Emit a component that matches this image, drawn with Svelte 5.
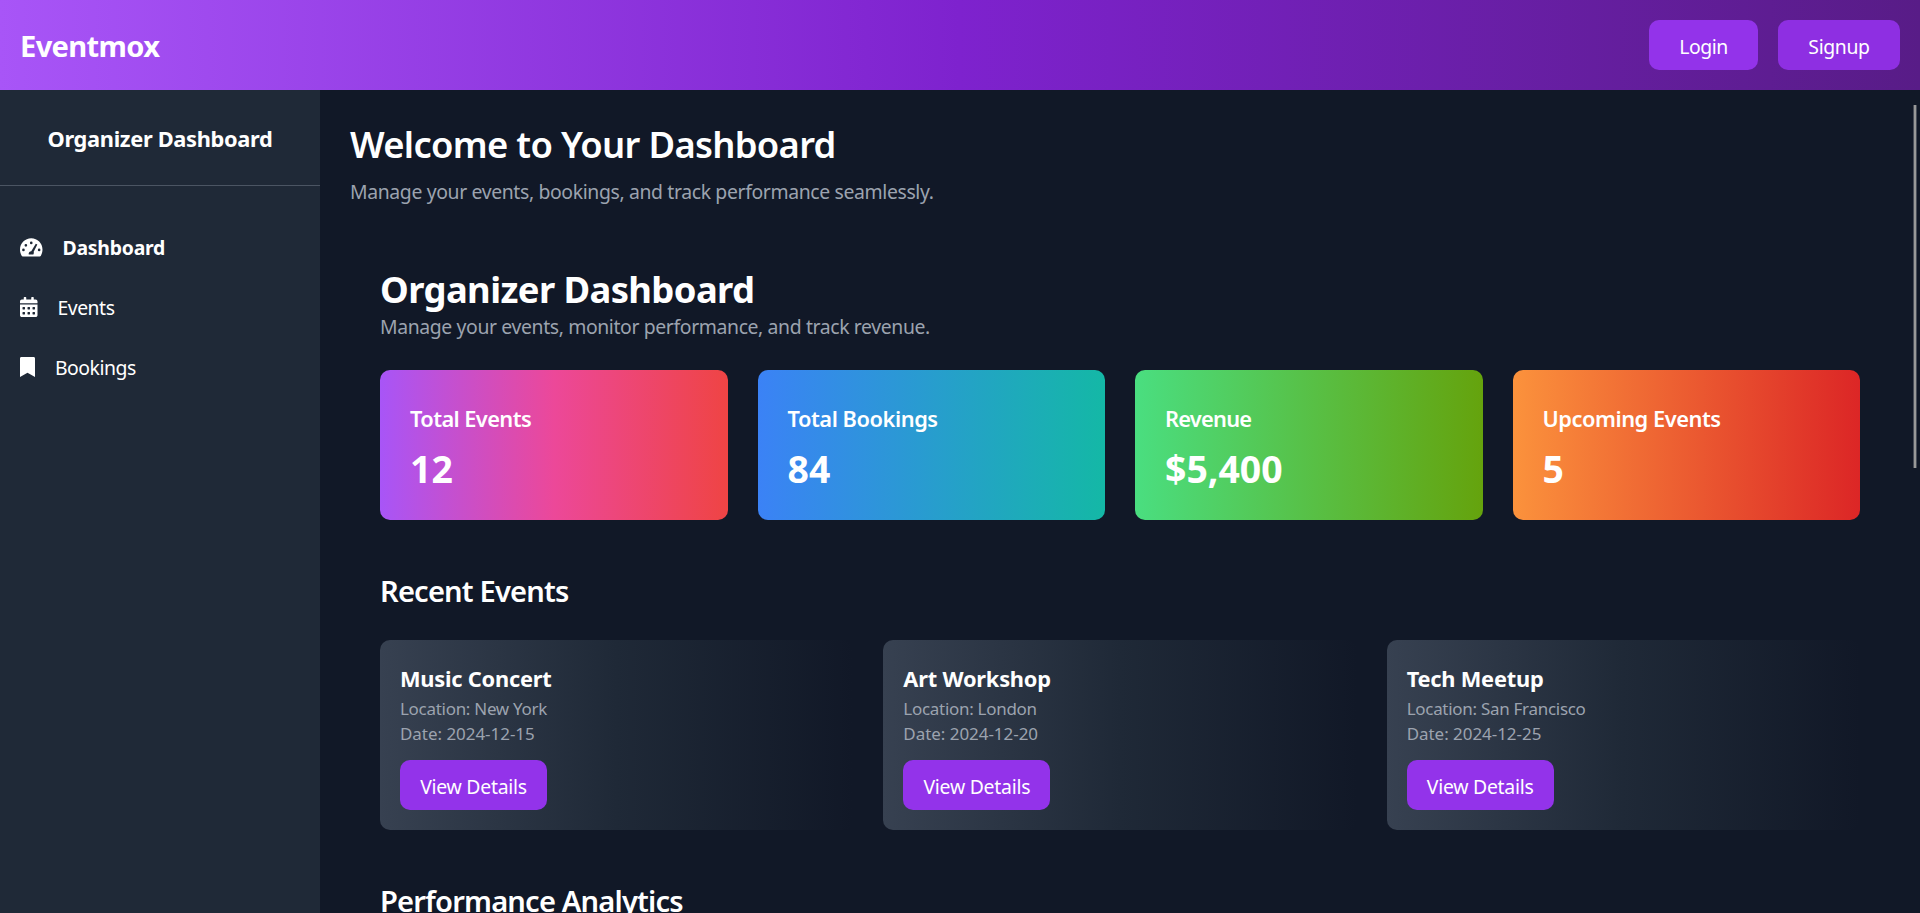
<script>
  const stats = [
    { title: 'Total Events', value: '12', tone: 'pink', track: -0.027 },
    { title: 'Total Bookings', value: '84', tone: 'blue', track: -0.0205 },
    { title: 'Revenue', value: '$5,400', tone: 'green', track: -0.0345 },
    { title: 'Upcoming Events', value: '5', tone: 'orange', track: -0.0215 }
  ];
  const events = [
    { name: 'Music Concert', location: 'New York', date: '2024-12-15' },
    { name: 'Art Workshop', location: 'London', date: '2024-12-20' },
    { name: 'Tech Meetup', location: 'San Francisco', date: '2024-12-25' }
  ];
  const nav = [
    {
      label: 'Dashboard',
      active: true,
      width: 576,
      path: 'M288 32C129 32 0 161 0 320c0 60 16 115 42 158 6 11 17 20 30 20h432c13 0 24-9 30-20 26-43 42-98 42-158C576 161 447 32 288 32zM288 118a34 34 0 1 1 0 68a34 34 0 1 1 0-68zM150 180a34 34 0 1 1 0 68a34 34 0 1 1 0-68zM88 296a34 34 0 1 1 0 68a34 34 0 1 1 0-68zM490 296a34 34 0 1 1 0 68a34 34 0 1 1 0-68zM404 170l40 24-94 186c8 22 4 46-8 66H224c-10-44 18-78 64-84z'
    },
    {
      label: 'Events',
      width: 448,
      path: 'M0 464c0 26.5 21.5 48 48 48h352c26.5 0 48-21.5 48-48V192H0v272zm320-196c0-6.6 5.4-12 12-12h40c6.6 0 12 5.4 12 12v40c0 6.6-5.4 12-12 12h-40c-6.6 0-12-5.4-12-12v-40zm0 128c0-6.6 5.4-12 12-12h40c6.6 0 12 5.4 12 12v40c0 6.6-5.4 12-12 12h-40c-6.6 0-12-5.4-12-12v-40zM192 268c0-6.6 5.4-12 12-12h40c6.6 0 12 5.4 12 12v40c0 6.6-5.4 12-12 12h-40c-6.6 0-12-5.4-12-12v-40zm0 128c0-6.6 5.4-12 12-12h40c6.6 0 12 5.4 12 12v40c0 6.6-5.4 12-12 12h-40c-6.6 0-12-5.4-12-12v-40zM64 268c0-6.6 5.4-12 12-12h40c6.6 0 12 5.4 12 12v40c0 6.6-5.4 12-12 12H76c-6.6 0-12-5.4-12-12v-40zm0 128c0-6.6 5.4-12 12-12h40c6.6 0 12 5.4 12 12v40c0 6.6-5.4 12-12 12H76c-6.6 0-12-5.4-12-12v-40zM400 64h-48V16c0-8.8-7.2-16-16-16h-32c-8.8 0-16 7.2-16 16v48H160V16c0-8.8-7.2-16-16-16h-32c-8.8 0-16 7.2-16 16v48H48C21.5 64 0 85.5 0 112v48h448v-48c0-26.5-21.5-48-48-48z'
    },
    {
      label: 'Bookings',
      width: 384,
      path: 'M0 512V36C0 16 16 0 36 0h312c20 0 36 16 36 36v476L192 400 0 512z'
    }
  ];
</script>

<div class="page">
  <header class="topbar">
    <div class="brand">Eventmox</div>
    <div class="actions">
      <button class="login">Login</button>
      <button class="signup">Signup</button>
    </div>
  </header>

  <div class="body">
    <aside class="sidebar">
      <h2>Organizer Dashboard</h2>
      <nav>
        {#each nav as item}
          <a href="#top" class:active={item.active}>
            <svg viewBox="0 0 {item.width} 512" height="20" width={(item.width / 512) * 20} aria-hidden="true">
              <path fill="currentColor" fill-rule="evenodd" d={item.path} />
            </svg>
            <span>{item.label}</span>
          </a>
        {/each}
      </nav>
    </aside>

    <main>
      <h1 class="welcome">Welcome to Your Dashboard</h1>
      <p class="lead">Manage your events, bookings, and track performance seamlessly.</p>

      <section class="content">
        <h1 class="title">Organizer Dashboard</h1>
        <p class="sub">Manage your events, monitor performance, and track revenue.</p>

        <div class="stats">
          {#each stats as s}
            <div class="stat {s.tone}">
              <h3 style="letter-spacing: {s.track}em">{s.title}</h3>
              <p>{s.value}</p>
            </div>
          {/each}
        </div>

        <h2 class="heading">Recent Events</h2>
        <div class="events">
          {#each events as e}
            <article class="event">
              <h3>{e.name}</h3>
              <p>Location: {e.location}</p>
              <p class="date">Date: {e.date}</p>
              <button>View Details</button>
            </article>
          {/each}
        </div>

        <h2 class="heading">Performance Analytics</h2>
      </section>
      <div class="scroll-thumb"></div>
    </main>
  </div>
</div>

<style>
  :global(body) {
    background: #111827;
    overflow: hidden;
  }
  .page {
    height: 913px;
    display: flex;
    flex-direction: column;
    overflow: hidden;
    color: #fff;
    font: 400 19.4px/30px 'Noto Sans', 'Open Sans', sans-serif;
    letter-spacing: -0.0188em;
    white-space: nowrap;
  }
  h1, h2, h3, p {
    margin: 0;
  }
  .topbar {
    flex: none;
    height: 90px;
    box-sizing: border-box;
    padding: 0 20px;
    display: flex;
    align-items: center;
    justify-content: space-between;
    background: linear-gradient(to right, #a855f7, #7e22ce, #581c87);
  }
  .brand {
    font-size: 29.1px;
    line-height: 40px;
    padding-top: 2px;
    font-weight: 700;
    letter-spacing: -0.022em;
  }
  .actions {
    display: flex;
    gap: 20px;
  }
  button {
    height: 50px;
    padding: 3px 0 0;
    border: 0;
    border-radius: 10px;
    background: #9333ea;
    color: #fff;
    font: inherit;
    letter-spacing: -0.0129em;
  }
  .login {
    width: 109px;
    letter-spacing: -0.0235em;
  }
  .signup {
    width: 122px;
    background: #8e2fe2;
    letter-spacing: -0.019em;
  }
  .body {
    flex: 1;
    min-height: 0;
    display: flex;
  }
  .sidebar {
    flex: none;
    width: 320px;
    background: #1f2937;
  }
  .sidebar h2 {
    padding: 31px 0 29px;
    border-bottom: 1px solid #4b5563;
    text-align: center;
    font-size: 21.825px;
    line-height: 35px;
    font-weight: 700;
    letter-spacing: -0.015em;
  }
  nav {
    padding-top: 31px;
    display: flex;
    flex-direction: column;
  }
  nav a {
    height: 60px;
    padding-left: 20px;
    display: flex;
    align-items: center;
    gap: 20px;
    color: #fff;
    text-decoration: none;
    letter-spacing: -0.025em;
  }
  nav span {
    padding-top: 1px;
  }
  nav .active {
    font-weight: 700;
    letter-spacing: -0.0117em;
  }
  main {
    flex: 1;
    min-width: 0;
    position: relative;
    padding: 30px;
    background: #111827;
  }
  .welcome {
    padding-top: 2px;
    height: 43px;
    font-size: 36.4px;
    line-height: 45px;
    font-weight: 600;
    letter-spacing: -0.0193em;
  }
  .lead, .sub {
    height: 28px;
    padding-top: 2px;
    color: #9ca3af;
  }
  .lead {
    margin-top: 10px;
  }
  .content {
    padding: 60px 30px 0;
  }
  .title {
    height: 43px;
    padding-top: 2px;
    font-size: 36.4px;
    line-height: 45px;
    font-weight: 700;
    letter-spacing: -0.0165em;
  }
  .sub {
    letter-spacing: -0.0195em;
  }
  .stats {
    margin-top: 30px;
    display: grid;
    grid-template-columns: repeat(4, 1fr);
    gap: 30px;
  }
  .stat {
    height: 150px;
    box-sizing: border-box;
    padding: 31px 30px 29px;
    border-radius: 10px;
  }
  .stat h3 {
    font-size: 21.825px;
    line-height: 35px;
    font-weight: 600;
  }
  .stat p {
    margin-top: 10px;
    font-size: 37.4px;
    line-height: 45px;
    font-weight: 700;
    letter-spacing: 0;
  }
  .pink {
    background: linear-gradient(to right, #a855f7, #ec4899, #ef4444);
  }
  .blue {
    background: linear-gradient(to right, #3b82f6, #14b8a6);
  }
  .green {
    background: linear-gradient(to right, #4ade80, #65a30d);
  }
  .orange {
    background: linear-gradient(to right, #fb923c, #dc2626);
  }
  .heading {
    margin: 51px 0 29px;
    font-size: 29.1px;
    line-height: 40px;
    font-weight: 600;
    letter-spacing: -0.028em;
  }
  .events {
    display: grid;
    grid-template-columns: repeat(3, 1fr);
    gap: 30px;
  }
  .event {
    height: 190px;
    box-sizing: border-box;
    padding: 21px 20px 19px;
    border-radius: 10px;
    background: linear-gradient(to right, #374151, #1f2937, #111827);
  }
  .event h3 {
    font-size: 21.825px;
    line-height: 35px;
    font-weight: 700;
    letter-spacing: -0.01em;
  }
  .event p {
    font-size: 16.975px;
    line-height: 25px;
    color: #9ca3af;
    letter-spacing: -0.0163em;
  }
  .event .date {
    letter-spacing: -0.0017em;
  }
  .event button {
    display: block;
    width: 147px;
    margin-top: 14px;
  }
  .scroll-thumb {
    position: absolute;
    top: 15px;
    right: 3px;
    width: 2px;
    height: 363px;
    border: solid #474c57;
    border-width: 0 1px;
    border-radius: 1px;
    background: #989898;
  }
</style>
